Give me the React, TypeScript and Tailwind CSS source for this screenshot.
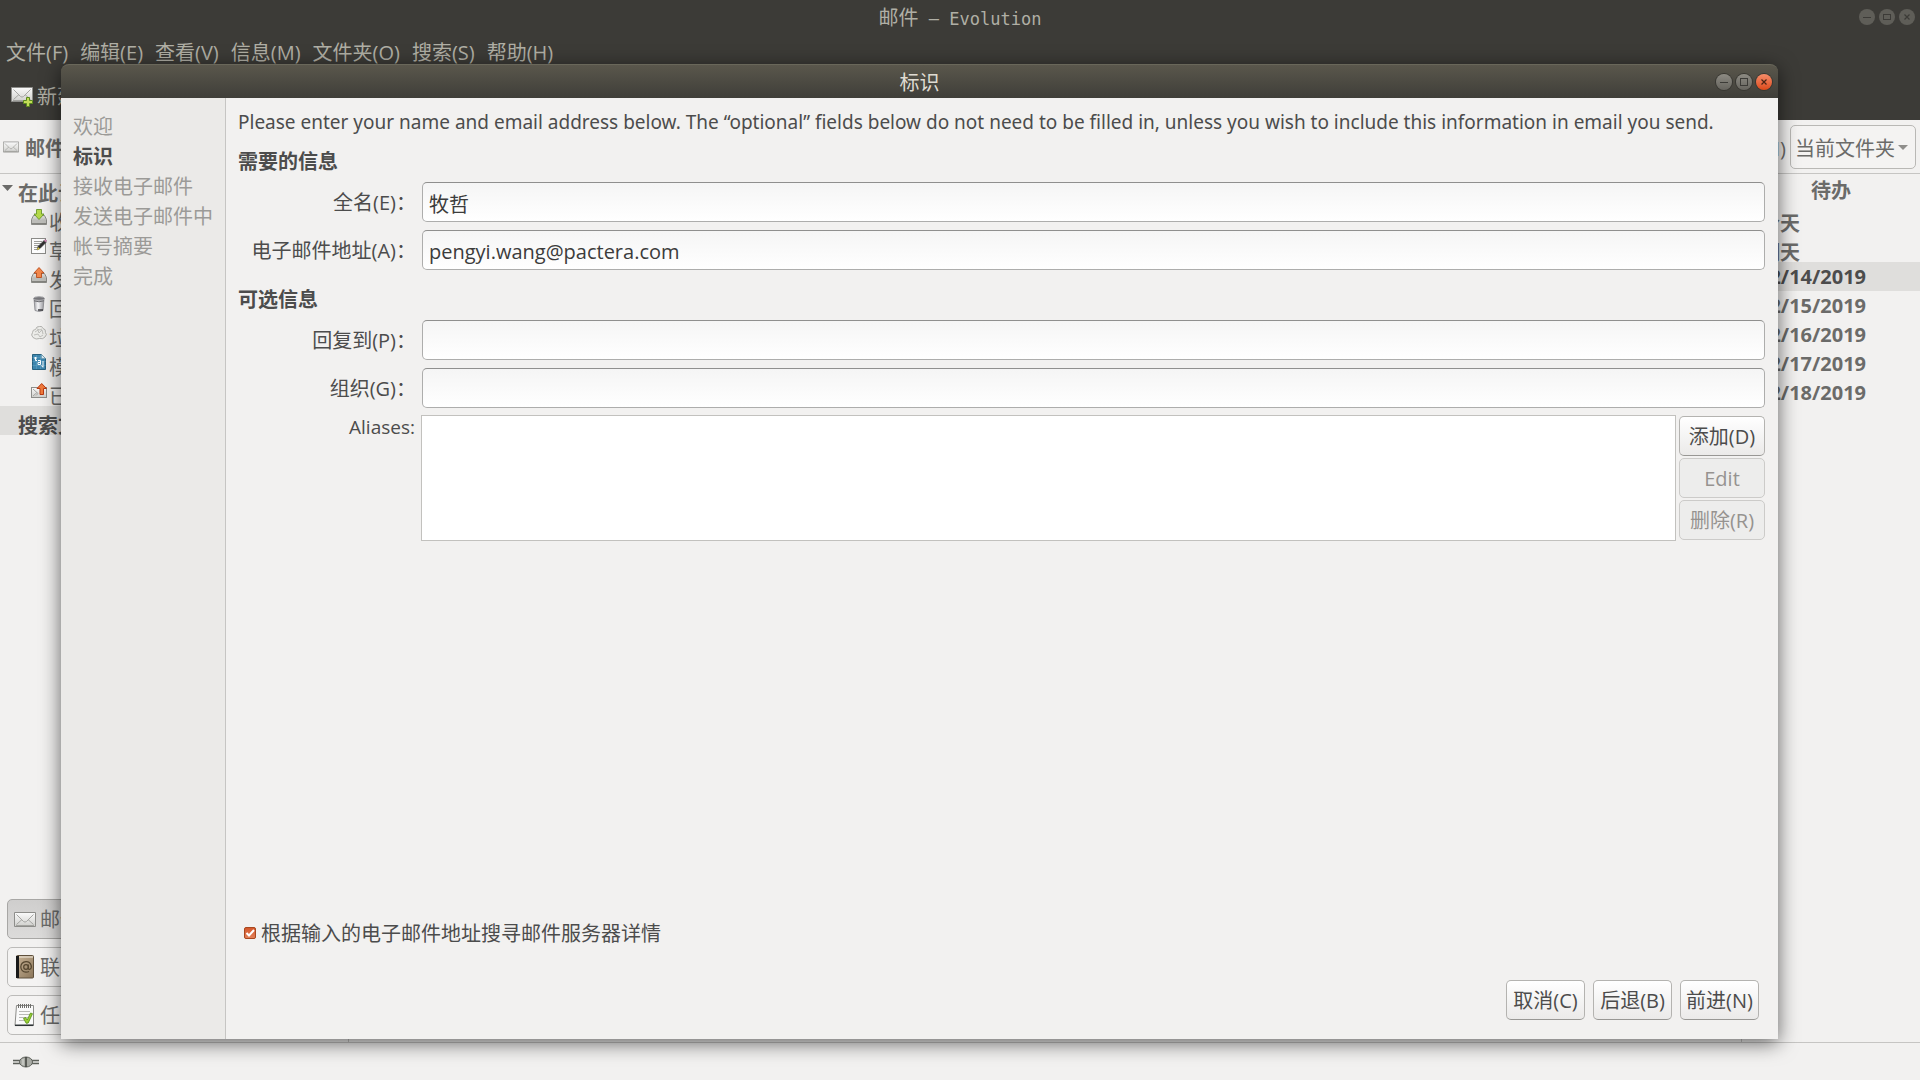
import type { ReactNode } from 'react';

const MENUS = ['文件(F)', '编辑(E)', '查看(V)', '信息(M)', '文件夹(O)', '搜索(S)', '帮助(H)'];

const STEPS = ['欢迎', '标识', '接收电子邮件', '发送电子邮件中', '帐号摘要', '完成'];

const DATES = ['12/14/2019', '12/15/2019', '12/16/2019', '12/17/2019', '12/18/2019'];

const REQUIRED = [
  { id: 'full-name', label: '全名(E)：', type: 'text', value: '牧哲' },
  { id: 'email', label: '电子邮件地址(A)：', type: 'email', value: 'pengyi.wang@pactera.com' },
];

const OPTIONAL = [
  { id: 'reply-to', label: '回复到(P)：', type: 'email', value: '' },
  { id: 'organization', label: '组织(G)：', type: 'text', value: '' },
];

function Gradients() {
  return (
    <svg width="0" height="0" className="absolute" aria-hidden="true">
      <defs>
        <linearGradient id="paper" x1="0" y1="0" x2="0" y2="1">
          <stop offset="0" stopColor="#fbfbfb" />
          <stop offset="1" stopColor="#cfcfcc" />
        </linearGradient>
        <linearGradient id="tray" x1="0" y1="0" x2="0" y2="1">
          <stop offset="0" stopColor="#e4e4e2" />
          <stop offset="1" stopColor="#9c9c98" />
        </linearGradient>
        <linearGradient id="leather" x1="0" y1="0" x2="1" y2="1">
          <stop offset="0" stopColor="#c9b497" />
          <stop offset="1" stopColor="#8b765a" />
        </linearGradient>
        <linearGradient id="steel" x1="0" y1="0" x2="1" y2="0">
          <stop offset="0" stopColor="#a2a2a6" />
          <stop offset="0.4" stopColor="#f6f6f8" />
          <stop offset="1" stopColor="#9a9a9f" />
        </linearGradient>
      </defs>
    </svg>
  );
}

function Envelope() {
  return (
    <g strokeLinejoin="round">
      <rect x="0.5" y="0.5" width="21" height="14" fill="url(#paper)" stroke="#8d8d8a" />
      <path d="M2 13.5h18" stroke="#74746f" strokeOpacity="0.5" />
      <path d="M2.5 2.5l7 7q1.500 1.200 3 0l7-7M2.500 12.500l5.500-5M19.500 12.500L14 7.500" fill="none" stroke="#a5a5a2" />
    </g>
  );
}

function MailIcon({ className }: { className: string }) {
  return (
    <svg viewBox="0 0 22 15" className={className} aria-hidden="true">
      <Envelope />
    </svg>
  );
}

function NewMailIcon() {
  return (
    <svg viewBox="0 0 24 24" className="h-6 w-6" aria-hidden="true">
      <g transform="translate(1 3)">
        <Envelope />
      </g>
      <path d="M16.500 13.500h3v3h3v3h-3v3h-3v-3h-3v-3h3z" fill="#c4dc58" stroke="#5a8a1e" />
    </svg>
  );
}

function Tray({ children }: { children: ReactNode }) {
  return (
    <>
      <path d="M2.500 6.500h11l2 4v5H.5v-5z" fill="url(#tray)" stroke="#8a8a86" />
      <path d="M1 10.500h3.500l1 1.500h5l1-1.500H15v4.500H1z" fill="#bdbdb9" />
      <path d="M1 14.500h14" stroke="#84847f" />
      {children}
    </>
  );
}

const FOLDERS = [
  {
    name: '收件箱',
    icon: (
      <Tray>
        <path d="M5.500 .5h5v4.500h2.500L8 10.500 3 5h2.500z" fill="#b5d94a" stroke="#5d8f1c" strokeWidth="0.800" />
      </Tray>
    ),
  },
  {
    name: '草稿',
    icon: (
      <>
        <rect x="0.5" y="0.5" width="14" height="15" fill="#fdfdfd" stroke="#8b8b88" />
        <path d="M3 3.500h8M3 5.500h7M3 7.500h5M3 9.500h4M3 11.500h3" stroke="#9f9f9c" />
        <path d="M6 12l1-3.500 6-6 2 2-6 6z" fill="#2f2f2f" stroke="#444" strokeWidth="0.600" />
        <path d="M6 12l1-3 2 2z" fill="#d8c53c" />
        <path d="M13 2.500l1.500-1 1.300 1.300-1 1.500z" fill="#d890bd" stroke="#8d557b" strokeWidth="0.500" />
      </>
    ),
  },
  {
    name: '发件箱',
    icon: (
      <Tray>
        <path d="M5.500 10.500h5V6H13L8 .5 3 6h2.500z" fill="#f2874b" stroke="#b5420f" strokeWidth="0.800" />
      </Tray>
    ),
  },
  {
    name: '回收站',
    icon: (
      <>
        <path d="M3 2.500l1 12q4 2 8 0l1-12z" fill="url(#steel)" stroke="#85858a" strokeWidth="0.800" />
        <ellipse cx="8" cy="2.500" rx="5.500" ry="1.800" fill="#77777b" stroke="#a4a4a8" />
        <path d="M3 4.800q5 2 10 0" fill="none" stroke="#6d6d71" />
        <path d="M7 14h5" stroke="#3c3c40" strokeWidth="1.500" />
      </>
    ),
  },
  {
    name: '垃圾',
    icon: (
      <>
        <path
          d="M2 12.500Q-.5 10 1.500 7.500 1.500 4.500 4.500 4.500 5.500 1 8.500 1.500 11 .5 12 3.500 15 4 14.500 7.500 16.500 9.500 14 12 12 14.500 8.500 13.500 5 15 2 12.500z"
          fill="#ecece9"
          stroke="#a3a39f"
          strokeWidth="0.800"
        />
        <path d="M4 7l3-2 1 3 3-3 1 4M3 10l4-1 2 3 3-2M6 4l3 1 2-1" fill="none" stroke="#b4b4b0" strokeWidth="0.800" />
      </>
    ),
  },
  {
    name: '模板',
    icon: (
      <>
        <path d="M1.500.5h9l4 4v11h-13z" fill="#3d86ae" stroke="#27617f" />
        <path d="M1.500 3.500h9M1.500 7.500h13M1.500 11.500h13M5.500 1v14M9.500 1v14" stroke="#67a4c4" strokeWidth="0.500" />
        <path d="M10.500.5v4h4z" fill="#dceaf1" stroke="#6c98ad" strokeWidth="0.600" />
        <path d="M3 4h3M4.500 3v3.500H6M7 6.500h2.500v4H7V8.500h2.500M12 7v6M10.500 11.500L12 13.500" fill="none" stroke="#fff" />
      </>
    ),
  },
  {
    name: '已发送',
    icon: (
      <>
        <rect x="0.5" y="4.5" width="15" height="10" fill="url(#paper)" stroke="#8d8d8a" />
        <path d="M2 6l5 4.500L5 12.500M2 13l4-3.500" fill="none" stroke="#a3a3a0" />
        <path d="M9 11.500h3.500V5.500H15.500L10.700.5 6 5.500H9z" fill="#f07a3c" stroke="#b83a12" />
      </>
    ),
  },
];

function ContactsIcon() {
  return (
    <svg viewBox="0 0 22 24" className="h-6 w-[22px]" aria-hidden="true">
      <rect x="2.500" y="0.500" width="17" height="22.500" rx="1" fill="url(#leather)" stroke="#5f503c" />
      <path d="M4 2h15" stroke="#f3ede2" />
      <path d="M2 1h3v22H2z" fill="#191919" />
      <circle cx="12" cy="12" r="2.300" fill="none" stroke="#54462f" strokeWidth="1.200" />
      <path
        d="M14.300 9.500v3.500q.2 1.700 1.600 1.300 2-1 1.300-3.800Q15.800 6.500 12 6.700 7 7.200 6.800 12q.4 4.800 5.200 5.200 1.700 0 3-.7"
        fill="none"
        stroke="#54462f"
        strokeWidth="1.200"
      />
    </svg>
  );
}

function TasksIcon() {
  return (
    <svg viewBox="0 0 22 24" className="h-6 w-[22px]" aria-hidden="true">
      <path d="M1 22.500L2.500 2.500h17v19.500z" fill="#fafafa" stroke="#8c8c89" />
      <path d="M1 22.300h18.500" stroke="#2e3436" strokeWidth="1.500" />
      <path d="M4.500 1v4M6.500 1v4M8.500 1v4M10.500 1v4M12.500 1v4M14.500 1v4M16.500 1v4" stroke="#6f6f6c" />
      <path d="M5 8.500h11M5 11.500h11M5 14.500h9M5 17.500h5" stroke="#b9b9b6" />
      <path d="M9.500 15.500l2-1 1.700 2.500 3.300-7 2 .7-4.300 9.300-2 .3z" fill="#9bd034" stroke="#4f8a12" strokeWidth="0.800" />
    </svg>
  );
}

function OnlineIcon() {
  return (
    <svg viewBox="0 0 28 12" className="h-3 w-7" aria-hidden="true">
      <path d="M1 4.500h26M1 7.500h26" stroke="#5d605a" strokeWidth="1.500" />
      <path d="M1 6h26" stroke="#b5b7b1" />
      <ellipse cx="14" cy="6" rx="6.500" ry="5" fill="#a9aba5" stroke="#5d605a" />
      <path d="M14 1v10" stroke="#3f413c" strokeWidth="1.500" />
      <path d="M11 3v6" stroke="#dcddd9" />
    </svg>
  );
}

function WindowControls({ active }: { active?: boolean }) {
  const base = 'flex h-4 w-4 items-center justify-center rounded-full';
  const plain = active
    ? 'bg-linear-to-b from-[#8d8b83] to-[#66645e] text-[#3c3b37] shadow-[0_0_0_1px_#383732]'
    : 'bg-[#5f5e58] text-[#3c3b37]';
  const close = active
    ? 'bg-linear-to-b from-[#f58c68] to-[#dd4814] text-[#4b2414] shadow-[0_0_0_1px_#383732]'
    : plain;
  return (
    <div className="flex gap-1">
      <button type="button" aria-label="最小化" className={`${base} ${plain}`}>
        <svg viewBox="0 0 16 16" className="h-4 w-4" stroke="currentColor">
          <path d="M4 8.500h8" />
        </svg>
      </button>
      <button type="button" aria-label="最大化" className={`${base} ${plain}`}>
        <svg viewBox="0 0 16 16" className="h-4 w-4" stroke="currentColor" fill="none">
          {active ? <rect x="4.500" y="4.500" width="7" height="7" /> : <rect x="4.500" y="5.500" width="7" height="5" />}
        </svg>
      </button>
      <button type="button" aria-label="关闭" className={`${base} ${close}`}>
        <svg viewBox="0 0 16 16" className="h-4 w-4" stroke="currentColor" strokeWidth="1.200">
          <path d="M5.500 5.500l5 5M10.500 5.500l-5 5" />
        </svg>
      </button>
    </div>
  );
}

function Button({ children, disabled, className = '' }: { children: ReactNode; disabled?: boolean; className?: string }) {
  return (
    <button
      type="button"
      disabled={disabled}
      className={`h-10 rounded-[5px] border border-[#b4b3b0] border-b-[#989794] bg-linear-to-b from-white to-[#ebeae9] pt-0.5 text-[#4c4c4c] disabled:border-[#cccbc9] disabled:bg-none disabled:bg-[#ededec] disabled:text-[#969390] ${className}`}
    >
      {children}
    </button>
  );
}

function Field({ id, label, type, value }: { id: string; label: string; type: string; value: string }) {
  return (
    <div className="flex items-center gap-1.5">
      <label htmlFor={id} className="w-[178px] shrink-0 pt-0.5 text-right whitespace-nowrap">
        {label}
      </label>
      <input
        id={id}
        type={type}
        defaultValue={value}
        className="h-10 min-w-0 flex-1 rounded-[5px] border border-[#adadac] border-t-[#8f8f8e] bg-linear-to-b from-[#f5f5f5] to-white px-1.5 pt-0.5 text-[#3c3c3c] outline-none"
      />
    </div>
  );
}

function Switcher({ icon, children, pressed }: { icon: ReactNode; children: ReactNode; pressed?: boolean }) {
  return (
    <button
      type="button"
      aria-pressed={pressed}
      className={`flex h-10 items-center gap-1 rounded-[5px] border px-1.5 ${
        pressed ? 'border-[#a8a7a5] bg-linear-to-b from-[#cfcecd] to-[#dcdbda]' : 'border-[#bcbbb9] bg-[#f4f3f2]'
      }`}
    >
      {icon}
      <span className="pt-0.5">{children}</span>
    </button>
  );
}

function MainWindow() {
  return (
    <div className="flex h-screen flex-col text-[#6b6b69]">
      <header className="bg-[#3c3b37] text-[#b0afa5]">
        <div className="grid h-8 grid-cols-[1fr_auto_1fr] items-center">
          <h1 className="col-start-2 pt-1 font-['DejaVu_Sans_Mono','Noto_Sans_CJK_SC',monospace] text-[17px]">
            <span className="text-xl">邮件</span> – Evolution
          </h1>
          <div className="flex justify-end pr-[5px]">
            <WindowControls />
          </div>
        </div>
        <nav className="flex h-10 items-center gap-3 px-1.5 pt-0.5">
          {MENUS.map((menu) => (
            <button key={menu} type="button">
              {menu}
            </button>
          ))}
        </nav>
        <div className="flex h-12 items-center px-2.5">
          <button type="button" className="flex items-center gap-[3px]">
            <NewMailIcon />
            <span className="pt-0.5">新建</span>
          </button>
        </div>
      </header>

      <div className="flex h-[54px] items-center justify-between border-b border-[#c6c5c3] bg-[#f2f1f0] pr-1 pl-[3px]">
        <div className="flex items-center gap-1.5 font-bold">
          <MailIcon className="h-3 w-4" />
          <span className="pt-1">邮件</span>
        </div>
        <div className="flex items-center gap-1">
          <label htmlFor="scope" className="pt-1">
            于(I)
          </label>
          <div className="relative">
            <select
              id="scope"
              className="h-11 w-[126px] appearance-none rounded-[5px] border border-[#b9b8b5] bg-[#f4f3f2] pt-1 pl-1"
            >
              <option>当前文件夹</option>
            </select>
            <svg viewBox="0 0 10 5" className="pointer-events-none absolute top-5 right-2 h-[5px] w-2.5">
              <path d="M0 0h10L5 5z" fill="#8f8e8b" />
            </svg>
          </div>
        </div>
      </div>

      <div className="flex min-h-0 flex-1 bg-[#f2f1f0]">
        <aside className="flex w-[349px] shrink-0 flex-col border-r border-[#c6c5c3]">
          <div className="flex h-[29px] items-center font-bold">
            <svg viewBox="0 0 18 29" className="h-[29px] w-[18px] shrink-0" aria-hidden="true">
              <path d="M2 11h11l-5.500 6z" fill="#6b6b69" />
            </svg>
            <span className="pt-2.5">在此计算机</span>
          </div>
          <ul>
            {FOLDERS.map(({ name, icon }) => (
              <li key={name} className="flex h-[29px] items-center gap-0.5 pl-[31px]">
                <svg viewBox="0 0 16 16" className="mb-0.5 h-4 w-4" aria-hidden="true">
                  {icon}
                </svg>
                <span className="pt-2.5">{name}</span>
              </li>
            ))}
          </ul>
          <div className="flex h-[29px] items-center bg-[#dfdedc] pt-2.5 pl-[18px] font-bold text-[#4c4c4c]">搜索文件夹</div>
          <div className="mt-auto flex flex-col gap-2 px-[7px] pb-[7px]">
            <Switcher pressed icon={<MailIcon className="h-[15px] w-[22px]" />}>
              邮件
            </Switcher>
            <Switcher icon={<ContactsIcon />}>联系人</Switcher>
            <Switcher icon={<TasksIcon />}>任务</Switcher>
          </div>
        </aside>
        <div className="flex-1" />
        <aside className="w-[179px] shrink-0 border-l border-[#c6c5c3] font-bold">
          <h2 className="h-[30px] pt-1 text-center leading-[26px]">待办</h2>
          <ul>
            <li className="h-[29px] pt-[5px] pl-[18px] leading-[29px]">今天</li>
            <li className="h-[29px] pt-[5px] pl-[18px] leading-[29px]">明天</li>
            {DATES.map((date, i) => (
              <li key={date} className={`h-[29px] pl-4 leading-[29px] ${i === 0 ? 'bg-[#dfdedc] text-[#4c4c4c]' : ''}`}>
                {date}
              </li>
            ))}
          </ul>
        </aside>
      </div>

      <footer className="flex h-[38px] items-center border-t border-[#c6c5c3] bg-[#f2f1f0] px-3">
        <OnlineIcon />
      </footer>
    </div>
  );
}

function AccountDialog() {
  return (
    <div
      role="dialog"
      aria-labelledby="dialog-title"
      className="absolute top-16 right-[142px] bottom-[41px] left-[61px] flex flex-col rounded-t-lg text-[#4c4c4c] shadow-[0_4px_20px_rgba(0,0,0,0.6)]"
    >
      <header className="grid h-[34px] shrink-0 grid-cols-[1fr_auto_1fr] items-center rounded-t-lg border-t border-[#69675a] bg-linear-to-b from-[#5a574c] to-[#3f3e39]">
        <h2 id="dialog-title" className="col-start-2 pt-0.5 text-[#dfdbd2]">
          标识
        </h2>
        <div className="flex justify-end pr-1.5">
          <WindowControls active />
        </div>
      </header>

      <div className="flex min-h-0 flex-1">
        <ol className="w-[165px] shrink-0 border-r border-[#c6c5c3] bg-[#ebeae8] px-3 pt-3.5 text-[#9b9a97]">
          {STEPS.map((step) => (
            <li key={step} className={`leading-[30px] whitespace-nowrap ${step === '标识' ? 'font-bold text-[#4c4c4c]' : ''}`}>
              {step}
            </li>
          ))}
        </ol>

        <form className="flex min-w-0 flex-1 flex-col bg-[#f2f1f0] pt-2 pr-[13px] pl-3">
          <p className="font-['Noto_Sans','Open_Sans',sans-serif] text-[19px] leading-8">
            Please enter your name and email address below. The “optional” fields below do not need to be filled in, unless you
            wish to include this information in email you send.
          </p>

          <h3 className="mt-2 mb-1 leading-8 font-bold">需要的信息</h3>
          <div className="flex flex-col gap-2">
            {REQUIRED.map((field) => (
              <Field key={field.id} {...field} />
            ))}
          </div>

          <h3 className="mt-3.5 mb-1 leading-8 font-bold">可选信息</h3>
          <div className="flex flex-col gap-2">
            {OPTIONAL.map((field) => (
              <Field key={field.id} {...field} />
            ))}
          </div>

          <div className="mt-[7px] flex">
            <label htmlFor="aliases" className="w-[178px] shrink-0 pr-px text-right text-[19px] leading-6">
              Aliases:
            </label>
            <textarea
              id="aliases"
              className="ml-[5px] h-[126px] min-w-0 flex-1 resize-none border border-[#c2c1be] bg-white outline-none"
            />
            <div className="ml-[3px] flex w-[86px] flex-col gap-0.5 pt-px">
              <Button>添加(D)</Button>
              <Button disabled>Edit</Button>
              <Button disabled>删除(R)</Button>
            </div>
          </div>

          <label className="mt-auto flex items-center gap-[5px] pl-1.5">
            <span className="relative mb-0.5 flex">
              <input
                type="checkbox"
                defaultChecked
                className="h-3 w-3 appearance-none rounded-xs border border-[#a8481f] bg-[#e0592a] checked:bg-linear-to-b checked:from-[#d4572a] checked:to-[#e38058]"
              />
              <svg viewBox="0 0 12 12" className="pointer-events-none absolute inset-0 h-3 w-3" aria-hidden="true">
                <path d="M2.500 6l2.500 2.500L10 3" fill="none" stroke="#fff" strokeWidth="2" />
              </svg>
            </span>
            根据输入的电子邮件地址搜寻邮件服务器详情
          </label>

          <div className="mt-8 mb-[19px] flex justify-end gap-2 pr-1.5">
            <Button className="w-[79px]">取消(C)</Button>
            <Button className="w-[79px]">后退(B)</Button>
            <Button className="w-[79px]">前进(N)</Button>
          </div>
        </form>
      </div>
    </div>
  );
}

export default function App() {
  return (
    <div className="relative overflow-hidden font-['Open_Sans','Noto_Sans_CJK_SC',sans-serif] text-xl leading-7">
      <Gradients />
      <MainWindow />
      <AccountDialog />
    </div>
  );
}
